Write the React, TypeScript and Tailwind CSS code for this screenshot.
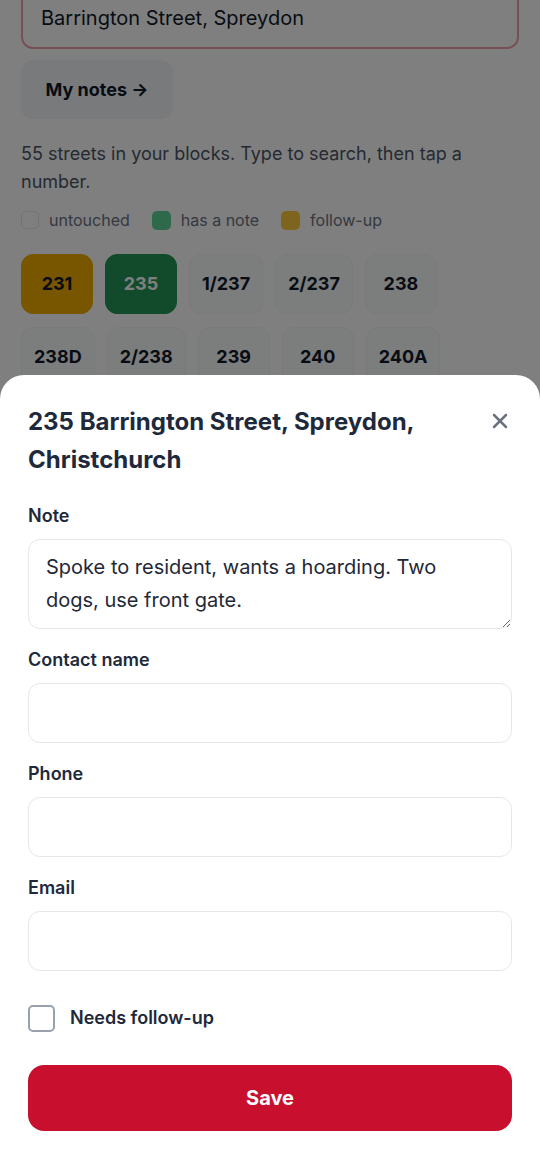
import React, { useState } from 'react';
import { X } from 'lucide-react';

type Chip = { label: string; state: 'none' | 'note' | 'follow' };

const chips: Chip[] = [
  { label: '231', state: 'follow' },
  { label: '235', state: 'note' },
  { label: '1/237', state: 'none' },
  { label: '2/237', state: 'none' },
  { label: '238', state: 'none' },
  { label: '238D', state: 'none' },
  { label: '2/238', state: 'none' },
  { label: '239', state: 'none' },
  { label: '240', state: 'none' },
  { label: '240A', state: 'none' },
];

const chipClass = {
  none: 'border border-gray-100 bg-gray-50 text-gray-900',
  note: 'border border-[#229656] bg-[#229656] text-white',
  follow: 'border border-[#f0ac00] bg-[#f0ac00] text-gray-900',
};

function Field({ label, children }: { label: string; children: React.ReactNode }) {
  return (
    <div className="flex flex-col gap-[9px]">
      <label className="text-lg leading-7 font-semibold text-[#1e293b]">{label}</label>
      {children}
    </div>
  );
}

export default function App() {
  const [note, setNote] = useState('Spoke to resident, wants a hoarding. Two dogs, use front gate.');
  const [name, setName] = useState('');
  const [phone, setPhone] = useState('');
  const [email, setEmail] = useState('');
  const [follow, setFollow] = useState(false);

  return (
    <div
      className="relative h-[1170px] w-[540px] overflow-hidden bg-white"
      style={{ fontFamily: 'Inter, "Noto Sans", sans-serif' }}
    >
      {/* страница за шторкой */}
      <div className="-mt-[14px] flex flex-col px-[21px]">
        <div className="flex h-[63px] items-center rounded-xl border-2 border-[#eea0ab] bg-white px-[18px] text-xl text-gray-900">
          Barrington Street, Spreydon
        </div>

        <button className="mt-[11px] h-[59px] w-[152px] rounded-xl bg-gray-100 text-lg font-bold text-gray-900">
          My notes →
        </button>

        <p className="mt-[21px] text-lg leading-7 text-gray-600">
          55 streets in your blocks. Type to search, then tap a number.
        </p>

        <div className="mt-[12px] flex items-center gap-[22px] text-base text-gray-500">
          <div className="flex items-center gap-[10px]">
            <span className="h-[18px] w-[18px] rounded-[5px] border border-gray-200 bg-white" />
            untouched
          </div>
          <div className="flex items-center gap-[10px]">
            <span className="h-[19px] w-[19px] rounded-[5px] bg-[#5fd296]" />
            has a note
          </div>
          <div className="flex items-center gap-[10px]">
            <span className="h-[19px] w-[19px] rounded-[5px] bg-[#fcc83a]" />
            follow-up
          </div>
        </div>

        <div className="mt-[22px] flex max-w-[480px] flex-wrap gap-x-[12px] gap-y-[13px]">
          {chips.map(c => (
            <div
              key={c.label}
              className={`flex h-[60px] min-w-[72px] items-center justify-center rounded-xl px-[12px] text-lg font-bold ${chipClass[c.state]}`}
            >
              {c.label}
            </div>
          ))}
        </div>
      </div>

      {/* затемнение */}
      <div className="absolute inset-0 bg-black/50" />

      {/* шторка */}
      <div className="absolute inset-x-0 bottom-0 flex h-[795px] flex-col rounded-t-[24px] bg-white px-7 pt-[28px]">
        <div className="flex items-start justify-between">
          <h2 className="max-w-[430px] text-2xl leading-[38px] font-bold text-[#1e293b]">
            235 Barrington Street, Spreydon, Christchurch
          </h2>
          <button className="mt-[6px] text-gray-500" aria-label="Close">
            <X size={24} strokeWidth={2.5} />
          </button>
        </div>

        <div className="mt-[23px] flex flex-col gap-[17px]">
          <Field label="Note">
            <textarea
              value={note}
              onChange={e => setNote(e.target.value)}
              className="h-[90px] w-full resize-y rounded-xl border border-gray-200 px-[17px] py-[11px] text-xl leading-[33px] text-[#1f2937] outline-none"
            />
          </Field>
          <Field label="Contact name">
            <input
              value={name}
              onChange={e => setName(e.target.value)}
              className="h-[60px] w-full rounded-xl border border-gray-200 px-4 text-xl outline-none"
            />
          </Field>
          <Field label="Phone">
            <input
              value={phone}
              onChange={e => setPhone(e.target.value)}
              className="h-[60px] w-full rounded-xl border border-gray-200 px-4 text-xl outline-none"
            />
          </Field>
          <Field label="Email">
            <input
              value={email}
              onChange={e => setEmail(e.target.value)}
              className="h-[60px] w-full rounded-xl border border-gray-200 px-4 text-xl outline-none"
            />
          </Field>
        </div>

        <label className="mt-[33px] flex cursor-pointer items-center gap-[15px]">
          <span
            onClick={() => setFollow(v => !v)}
            className={`h-[27px] w-[27px] rounded-[5px] border-2 ${follow ? 'border-[#c8102e] bg-[#c8102e]' : 'border-gray-400 bg-white'}`}
          />
          <span className="text-lg font-semibold text-[#1e293b]">Needs follow-up</span>
        </label>

        <button className="mt-[33px] h-[66px] w-full rounded-2xl bg-[#c8102e] text-xl font-bold text-white">
          Save
        </button>
      </div>
    </div>
  );
}
